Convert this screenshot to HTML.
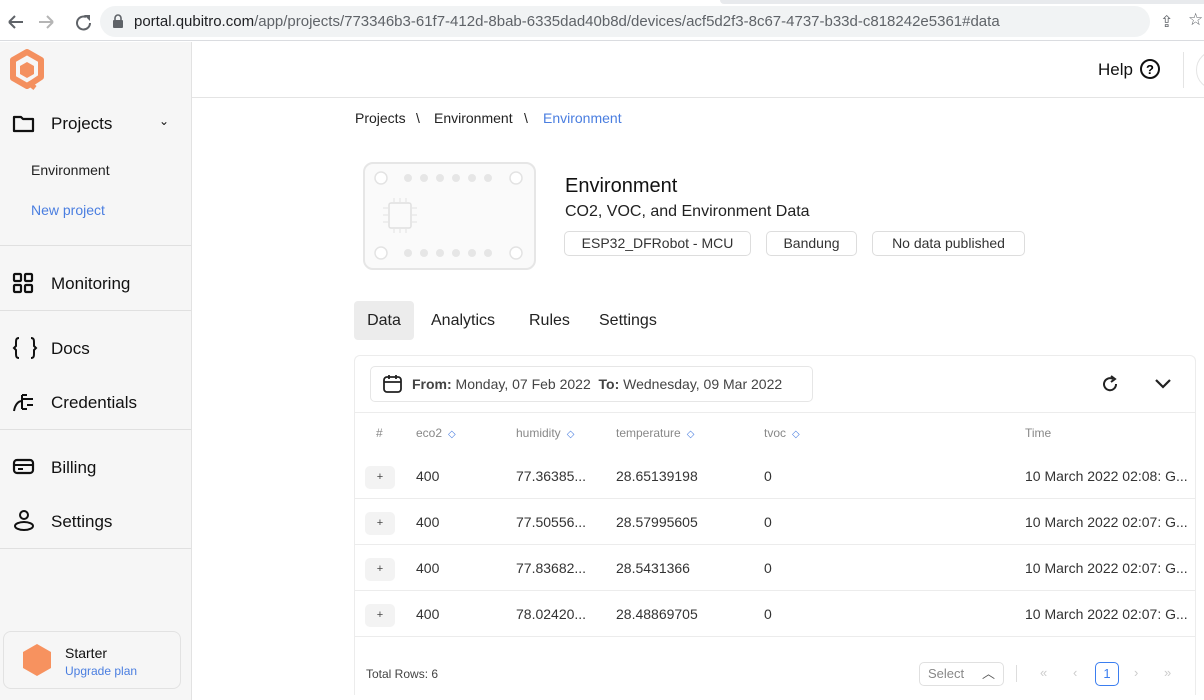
<!DOCTYPE html>
<html><head><meta charset="utf-8"><style>
*{box-sizing:border-box;margin:0;padding:0}
body{width:1204px;height:700px;overflow:hidden;font-family:"Liberation Sans",sans-serif;background:#fff;position:relative;color:#111}
.abs{position:absolute}
.chrome{left:0;top:0;width:1204px;height:41px;background:#fff;border-bottom:1px solid #dadce0}
.url{left:100px;top:6px;width:1050px;height:31px;background:#f1f3f4;border-radius:16px;font-size:15px;color:#202124;line-height:31px;padding-left:34px}
.url span{color:#5f6368}
.side{left:0;top:42px;width:192px;height:658px;background:#f6f6f6;border-right:1px solid #e2e2e2}
.nav{position:absolute;left:51px;font-size:17px;color:#111}
.ico{position:absolute;left:12px}
.hr{position:absolute;left:0;width:191px;height:1px;background:#e0e0e0}
.top{left:192px;top:42px;width:1012px;height:56px;border-bottom:1px solid #e4e4e4;background:#fff}
.chip{position:absolute;top:231px;height:25px;border:1px solid #ddd;border-radius:5px;font-size:14px;color:#333;line-height:23px;text-align:center}
.tab{position:absolute;top:301px;height:39px;line-height:39px;font-size:16px;color:#222}
.th{position:absolute;top:426px;font-size:12px;color:#888}
.th b{color:#4a7ee0;font-weight:normal;font-size:10px;margin-left:6px}
.td{position:absolute;font-size:14px;color:#333}
.plus{position:absolute;left:365px;width:30px;height:23px;background:#f3f3f3;border-radius:5px;text-align:center;font-size:11px;line-height:23px;color:#444}
.rl{position:absolute;left:355px;width:840px;height:1px;background:#ececec}
</style></head><body>
<div class="abs chrome"></div>
<svg class="abs" style="left:6px;top:12px" width="90" height="20"><path d="M3 10H17M3 10L9 4M3 10L9 16" stroke="#5f6368" stroke-width="2" fill="none"/><path d="M33 10H47M47 10L41 4M47 10L41 16" stroke="#b5b5b5" stroke-width="2" fill="none"/><path d="M80 5A6.5 6.5 0 1 0 84 11" stroke="#5f6368" stroke-width="2" fill="none"/><path d="M78 3L84 3L84 9Z" fill="#5f6368"/></svg>
<div class="abs url">portal.qubitro.com<span>/app/projects/773346b3-61f7-412d-8bab-6335dad40b8d/devices/acf5d2f3-8c67-4737-b33d-c818242e5361#data</span></div>
<svg class="abs" style="left:112px;top:14px" width="12" height="14"><rect x="1" y="6" width="10" height="8" rx="1" fill="#5f6368"/><path d="M3 6V4a3 3 0 0 1 6 0v2" stroke="#5f6368" stroke-width="1.6" fill="none"/></svg>
<div class="abs" style="left:1160px;top:12px;font-size:16px;color:#5f6368">⇪</div>
<div class="abs" style="left:1188px;top:10px;font-size:17px;color:#5f6368">☆</div>
<div class="abs" style="left:720px;top:0;width:484px;height:4px;background:#e8eaed;border-radius:0 0 0 6px"></div>

<div class="abs side">
<svg class="abs" style="left:8px;top:6px" width="38" height="44" viewBox="0 0 38 44"><path d="M19 4L33 12V29L24 35L19 38L5 30V12Z" stroke="#f4905f" stroke-width="6" fill="none" stroke-linejoin="round"/><path d="M19 14L26 18V26L19 30L12 26V18Z" fill="#f4905f"/><path d="M22 36L27 40" stroke="#f4905f" stroke-width="5"/></svg>
<svg class="ico" style="top:72px" width="24" height="20"><path d="M2 3h7l2 2h10v12H2z" stroke="#111" stroke-width="2.2" fill="none" stroke-linejoin="round"/></svg>
<div class="nav" style="top:72px">Projects</div>
<div class="abs" style="left:159px;top:72px;font-size:12px">⌄</div>
<div class="abs" style="left:31px;top:120px;font-size:14px;color:#222">Environment</div>
<div class="abs" style="left:31px;top:160px;font-size:14px;color:#4a7ee0">New project</div>
<div class="hr" style="top:203px"></div>
<svg class="ico" style="top:230px" width="22" height="22"><g fill="none" stroke="#111" stroke-width="2.2"><rect x="2" y="2" width="7" height="7" rx="1"/><rect x="13" y="2" width="7" height="7" rx="1"/><rect x="2" y="13" width="7" height="7" rx="1"/><rect x="13" y="13" width="7" height="7" rx="1"/></g></svg>
<div class="nav" style="top:232px">Monitoring</div>
<div class="hr" style="top:268px"></div>
<svg class="ico" style="top:294px" width="26" height="24"><path d="M7 2C4 2 4 4 4 7V10L2 12L4 14V17C4 20 4 22 7 22M19 2C22 2 22 4 22 7V10L24 12L22 14V17C22 20 22 22 19 22" stroke="#111" stroke-width="2" fill="none"/></svg>
<div class="nav" style="top:297px">Docs</div>
<svg class="ico" style="top:350px" width="24" height="20"><path d="M2 19C3 13 6 9 10 9M10 3v14M10 3h5M10 17h5M15 7h6M15 13h6M10 7h5" stroke="#111" stroke-width="2" fill="none"/></svg>
<div class="nav" style="top:351px">Credentials</div>
<div class="hr" style="top:387px"></div>
<svg class="ico" style="top:416px" width="24" height="18"><rect x="2" y="2" width="19" height="13" rx="3" stroke="#111" stroke-width="2.2" fill="none"/><path d="M2 7h19M6 11h5" stroke="#111" stroke-width="2"/></svg>
<div class="nav" style="top:416px">Billing</div>
<svg class="ico" style="top:467px" width="24" height="24"><circle cx="12" cy="6" r="4" stroke="#111" stroke-width="2" fill="none"/><ellipse cx="12" cy="17" rx="9" ry="4" stroke="#111" stroke-width="2" fill="none"/></svg>
<div class="nav" style="top:470px">Settings</div>
<div class="hr" style="top:506px"></div>
<div class="abs" style="left:3px;top:589px;width:178px;height:58px;border:1px solid #e2e2e2;border-radius:8px"></div>
<svg class="abs" style="left:22px;top:601px" width="30" height="34"><path d="M15 1L29 9V25L15 33L1 25V9Z" fill="#f7925f"/></svg>
<div class="abs" style="left:65px;top:603px;font-size:14px;color:#111">Starter</div>
<div class="abs" style="left:65px;top:622px;font-size:12px;color:#4a7ee0">Upgrade plan</div>
</div>

<div class="abs top"></div>
<div class="abs" style="left:1098px;top:60px;font-size:17px;color:#111">Help</div>
<svg class="abs" style="left:1139px;top:58px" width="22" height="22"><circle cx="11" cy="11" r="9" stroke="#111" stroke-width="2" fill="none"/><text x="11" y="16" font-size="13" font-weight="bold" text-anchor="middle" font-family="Liberation Sans">?</text></svg>
<div class="abs" style="left:1183px;top:52px;width:1px;height:36px;background:#e4e4e4"></div>
<div class="abs" style="left:1196px;top:50px;width:40px;height:40px;border:1px solid #e4e4e4;border-radius:50%"></div>

<div class="abs" style="left:355px;top:110px;font-size:14px;color:#222">Projects</div>
<div class="abs" style="left:416px;top:110px;font-size:14px;color:#222">\</div>
<div class="abs" style="left:434px;top:110px;font-size:14px;color:#222">Environment</div>
<div class="abs" style="left:524px;top:110px;font-size:14px;color:#222">\</div>
<div class="abs" style="left:543px;top:110px;font-size:14px;color:#4a7ee0">Environment</div>

<svg class="abs" style="left:363px;top:162px" width="173" height="108"><rect x="1" y="1" width="171" height="106" rx="9" fill="#fafafa" stroke="#e6e6e6" stroke-width="2"/><g fill="#fff" stroke="#e3e3e3" stroke-width="1.5"><circle cx="18" cy="16" r="6"/><circle cx="153" cy="16" r="6"/><circle cx="18" cy="91" r="6"/><circle cx="153" cy="91" r="6"/></g><g fill="#e6e6e6"><circle cx="45" cy="16" r="4"/><circle cx="61" cy="16" r="4"/><circle cx="77" cy="16" r="4"/><circle cx="93" cy="16" r="4"/><circle cx="109" cy="16" r="4"/><circle cx="125" cy="16" r="4"/><circle cx="45" cy="91" r="4"/><circle cx="61" cy="91" r="4"/><circle cx="77" cy="91" r="4"/><circle cx="93" cy="91" r="4"/><circle cx="109" cy="91" r="4"/><circle cx="125" cy="91" r="4"/></g><rect x="26" y="41" width="22" height="25" rx="2" fill="none" stroke="#e0e0e0" stroke-width="1.5"/><path d="M31 36v4M37 36v4M43 36v4M31 67v4M37 67v4M43 67v4M20 46h5M20 53h5M20 60h5M49 46h5M49 53h5M49 60h5" stroke="#e3e3e3" stroke-width="1"/></svg>
<div class="abs" style="left:565px;top:175px;font-size:20px;color:#111">Environment</div>
<div class="abs" style="left:565px;top:203px;font-size:16px;color:#222">CO2, VOC, and Environment Data</div>
<div class="chip" style="left:564px;width:187px">ESP32_DFRobot - MCU</div>
<div class="chip" style="left:766px;width:91px">Bandung</div>
<div class="chip" style="left:872px;width:153px">No data published</div>

<div class="tab" style="left:354px;width:60px;background:#ececec;border-radius:4px;text-align:center">Data</div>
<div class="tab" style="left:431px">Analytics</div>
<div class="tab" style="left:529px">Rules</div>
<div class="tab" style="left:599px">Settings</div>

<div class="abs" style="left:354px;top:355px;width:842px;height:340px;border:1px solid #ececec;border-bottom:none;border-radius:6px 6px 0 0"></div>
<div class="abs" style="left:370px;top:366px;width:443px;height:36px;border:1px solid #e6e6e6;border-radius:5px"></div>
<svg class="abs" style="left:382px;top:373px" width="22" height="22"><rect x="2" y="4" width="17" height="15" rx="3" stroke="#222" stroke-width="1.8" fill="none"/><path d="M2 9h17M7 2v4M14 2v4" stroke="#222" stroke-width="1.8"/></svg>
<div class="abs" style="left:412px;top:376px;font-size:14px;color:#444"><b>From:</b> Monday, 07 Feb 2022 &nbsp;<b>To:</b> Wednesday, 09 Mar 2022</div>
<svg class="abs" style="left:1101px;top:375px" width="18" height="18"><path d="M15 9A6 6 0 1 1 12 4" stroke="#222" stroke-width="2" fill="none"/><path d="M10 1L14 4L10 7" stroke="#222" stroke-width="2" fill="none"/></svg>
<svg class="abs" style="left:1154px;top:378px" width="18" height="12"><path d="M2 2L9 9L16 2" stroke="#222" stroke-width="2.2" fill="none"/></svg>
<div class="rl" style="top:412px"></div>

<div class="th" style="left:376px">#</div>
<div class="th" style="left:416px">eco2<b>◇</b></div>
<div class="th" style="left:516px">humidity<b>◇</b></div>
<div class="th" style="left:616px">temperature<b>◇</b></div>
<div class="th" style="left:764px">tvoc<b>◇</b></div>
<div class="th" style="left:1025px">Time</div>

<div class="plus" style="top:466px">+</div><div class="td" style="left:416px;top:468px">400</div><div class="td" style="left:516px;top:468px">77.36385...</div><div class="td" style="left:616px;top:468px">28.65139198</div><div class="td" style="left:764px;top:468px">0</div><div class="td" style="left:1025px;top:468px">10 March 2022 02:08: G...</div>
<div class="rl" style="top:498px"></div>
<div class="plus" style="top:512px">+</div><div class="td" style="left:416px;top:514px">400</div><div class="td" style="left:516px;top:514px">77.50556...</div><div class="td" style="left:616px;top:514px">28.57995605</div><div class="td" style="left:764px;top:514px">0</div><div class="td" style="left:1025px;top:514px">10 March 2022 02:07: G...</div>
<div class="rl" style="top:544px"></div>
<div class="plus" style="top:558px">+</div><div class="td" style="left:416px;top:560px">400</div><div class="td" style="left:516px;top:560px">77.83682...</div><div class="td" style="left:616px;top:560px">28.5431366</div><div class="td" style="left:764px;top:560px">0</div><div class="td" style="left:1025px;top:560px">10 March 2022 02:07: G...</div>
<div class="rl" style="top:590px"></div>
<div class="plus" style="top:604px">+</div><div class="td" style="left:416px;top:606px">400</div><div class="td" style="left:516px;top:606px">78.02420...</div><div class="td" style="left:616px;top:606px">28.48869705</div><div class="td" style="left:764px;top:606px">0</div><div class="td" style="left:1025px;top:606px">10 March 2022 02:07: G...</div>
<div class="rl" style="top:636px"></div>

<div class="abs" style="left:366px;top:667px;font-size:12px;color:#444">Total Rows: 6</div>
<div class="abs" style="left:919px;top:662px;width:85px;height:24px;border:1px solid #e0e0e0;border-radius:5px;font-size:13px;color:#888;line-height:22px;padding-left:8px">Select<span style="position:absolute;right:8px;color:#555">︿</span></div>
<div class="abs" style="left:1016px;top:665px;width:1px;height:17px;background:#ddd"></div>
<div class="abs" style="left:1040px;top:665px;font-size:13px;color:#ccc">«</div>
<div class="abs" style="left:1073px;top:665px;font-size:13px;color:#ccc">‹</div>
<div class="abs" style="left:1095px;top:662px;width:24px;height:24px;border:1px solid #3b7ef0;border-radius:5px;font-size:13px;color:#3b7ef0;text-align:center;line-height:22px">1</div>
<div class="abs" style="left:1134px;top:665px;font-size:13px;color:#ccc">›</div>
<div class="abs" style="left:1164px;top:665px;font-size:13px;color:#ccc">»</div>
</body></html>
